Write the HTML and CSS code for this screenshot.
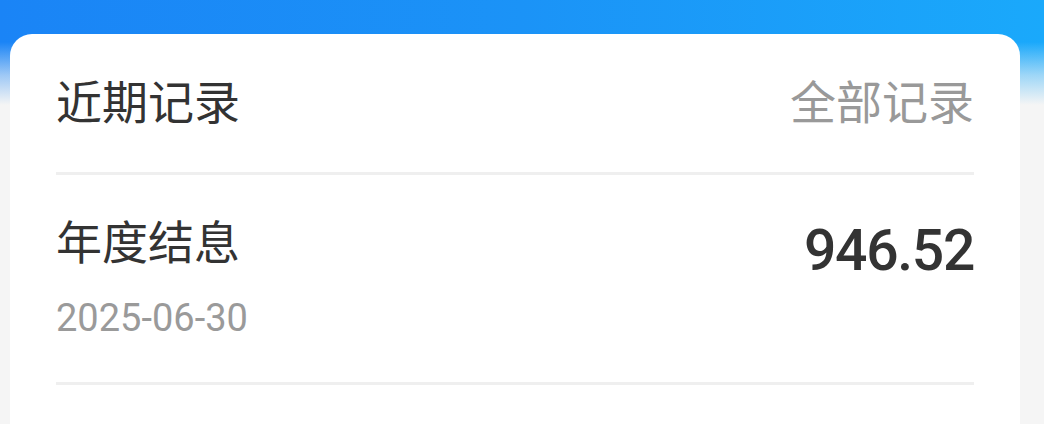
FILE: index.html
```html
<!DOCTYPE html>
<html lang="zh-CN">
<head>
<meta charset="utf-8">
<title>近期记录</title>
<link rel="stylesheet" href="styles.css">
</head>
<body>
<div class="page">
  <section class="card">
    <header class="card-head">
      <h2 class="title">近期记录</h2>
      <a class="more">全部记录</a>
    </header>
    <div class="record">
      <div class="record-info">
        <div class="record-name">年度结息</div>
        <div class="record-date">2025-06-30</div>
      </div>
      <div class="record-amount">946.52</div>
    </div>
  </section>
</div>
</body>
</html>
```

FILE: styles.css
```css
html, body {
  margin: 0;
  padding: 0;
}
body {
  width: 1044px;
  height: 424px;
  overflow: hidden;
  background:
    linear-gradient(to bottom, rgba(245,245,245,0) 42px, rgba(245,245,245,0.6) 75px, #f5f5f5 105px),
    linear-gradient(90deg, #1a84f6 0%, #1b93f7 50%, #1aa9fb 100%);
  background-color: #f5f5f5;
  font-family: "Noto Sans CJK SC", "Noto Sans", sans-serif;
}
.page {
  padding: 34px 24px 0 10px;
}
.card {
  background: #ffffff;
  border-radius: 22px 22px 0 0;
  padding: 0 46px;
  height: 390px;
  box-sizing: border-box;
}
.card-head {
  display: flex;
  justify-content: space-between;
  align-items: center;
  box-sizing: border-box;
  height: 141px;
  padding-bottom: 9px;
  border-bottom: 3px solid #efefef;
}
.title {
  margin: 0;
  font-size: 46px;
  font-weight: 400;
  color: #333333;
  line-height: 46px;
}
.more {
  font-size: 46px;
  color: #999999;
  line-height: 46px;
}
.record {
  display: flex;
  justify-content: space-between;
  align-items: flex-start;
  box-sizing: border-box;
  height: 210px;
  border-bottom: 3px solid #efefef;
}
.record-info {
  display: flex;
  flex-direction: column;
  padding-top: 40px;
}
.record-name {
  font-size: 46px;
  line-height: 48px;
  color: #333333;
}
.record-date {
  margin-top: 35px;
  font-family: Roboto, "Noto Sans", sans-serif;
  font-size: 38px;
  line-height: 40px;
  color: #9a9a9a;
}
.record-amount {
  padding-top: 47px;
  font-family: Roboto, "Noto Sans", sans-serif;
  font-weight: 500;
  font-size: 57px;
  line-height: 58px;
  letter-spacing: -1.3px;
  color: #333333;
}
```
